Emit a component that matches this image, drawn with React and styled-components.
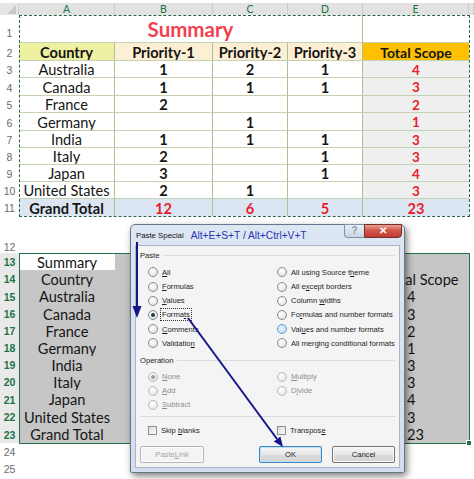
import React from 'react';
import styled, { createGlobalStyle } from 'styled-components';

const Global = createGlobalStyle`
  html, body { margin: 0; padding: 0; background: #fff; }
  body { width: 474px; height: 479px; overflow: hidden; font-family: Lato, "Liberation Sans", sans-serif; }
`;

const COLS = '19px 96px 98px 75px 75px 106px 5px';
const GRID = '#adc196';
const HGRID = '#c5d2b3';
const GREEN = '#217346';
const SEL = '#c6c6c6';

const Page = styled.div`
  position: relative;
  width: 474px;
  height: 479px;
  overflow: hidden;
  background: #fff;
  padding-top: 3px;
  box-sizing: border-box;
`;

const Row = styled.div`
  display: grid;
  grid-template-columns: ${COLS};
  height: ${p => p.$h}px;
`;

const Corner = styled.div`
  position: relative;
  background: #e6e6e6;
  border-right: 1px solid #d0d0d0;
  &::after {
    content: '';
    position: absolute;
    right: 2px;
    bottom: 1px;
    border-left: 9px solid transparent;
    border-bottom: 9px solid #c9c9c9;
  }
`;

const ColHead = styled.div`
  background: #e2e2e2;
  border-right: 1px solid #cdcdcd;
  color: ${GREEN};
  font-size: 10.5px;
  display: flex;
  align-items: center;
  justify-content: center;
  line-height: 1;
`;

const RowNum = styled.div`
  display: flex;
  align-items: flex-end;
  justify-content: center;
  padding-bottom: ${p => (p.$pb ?? 2)}px;
  box-sizing: border-box;
  font-family: "Liberation Sans", Arial, sans-serif;
  font-size: 10.5px;
  color: ${p => (p.$sel ? GREEN : '#6a6a6a')};
  font-weight: ${p => (p.$sel ? 700 : 400)};
  background: ${p => (p.$sel ? '#e9e9e9' : '#fff')};
`;

const Cell = styled.div`
  box-sizing: border-box;
  display: flex;
  align-items: center;
  justify-content: ${p => p.$align || 'center'};
  padding-left: ${p => p.$pl || 0}px;
  padding-top: 1px;
  background: ${p => p.$bg || 'transparent'};
  color: ${p => p.$color || '#151515'};
  font-size: ${p => p.$size || 14.6}px;
  font-weight: ${p => (p.$bold ? 700 : 400)};
  border-right: ${p => (p.$br ? `1px solid ${GRID}` : 'none')};
  border-bottom: ${p => (p.$bb ? `1px solid ${HGRID}` : 'none')};
  grid-column: ${p => (p.$span ? `span ${p.$span}` : 'auto')};
  white-space: nowrap;
  overflow: hidden;
`;

const Marquee = styled.div`
  position: absolute;
  left: 19px;
  top: 15px;
  width: 451px;
  height: 202px;
  box-sizing: border-box;
  border: 1px dashed #2a6548;
  pointer-events: none;
`;

const Selection = styled.div`
  position: absolute;
  left: 19px;
  top: 253px;
  width: 451px;
  height: 191px;
  box-sizing: border-box;
  border: 1px solid ${GREEN};
  pointer-events: none;
  &::after {
    content: '';
    position: absolute;
    right: -3px;
    bottom: -3px;
    width: 4px;
    height: 4px;
    background: ${GREEN};
    border: 1px solid #fff;
  }
`;

/* ---------- Dialog ---------- */
const Dialog = styled.div`
  position: absolute;
  left: 130px;
  top: 224px;
  width: 275px;
  height: 249px;
  box-sizing: border-box;
  background: linear-gradient(#dde7f3, #d3dfee);
  border: 1px solid #66778c;
  border-radius: 5px 5px 2px 2px;
  box-shadow: 2px 3px 7px rgba(0, 0, 0, 0.5);
  display: flex;
  flex-direction: column;
  padding: 0 4px 4px 4px;
  font-family: "Liberation Sans", Arial, sans-serif;
  z-index: 5;
`;

const TitleBar = styled.div`
  height: 21px;
  display: flex;
  align-items: center;
  padding-left: 1px;
`;

const TitleText = styled.span`
  font-size: 7.8px;
  color: #111;
`;

const TitleHint = styled.span`
  font-size: 10.2px;
  color: #2535b5;
  margin-left: 7px;
`;

const Caption = styled.div`
  margin-left: auto;
  align-self: flex-start;
  margin-top: -1px;
  margin-right: -2px;
  display: flex;
`;

const HelpBtn = styled.div`
  width: 20px;
  height: 14px;
  box-sizing: border-box;
  border: 1px solid #7f91a8;
  border-right: none;
  border-radius: 0 0 0 4px;
  background: linear-gradient(#e9eff6, #c9d5e3);
  color: #8a97a8;
  font-size: 10px;
  font-weight: 700;
  display: flex;
  align-items: center;
  justify-content: center;
  line-height: 1;
`;

const CloseBtn = styled.div`
  width: 38px;
  height: 14px;
  box-sizing: border-box;
  border: 1px solid #7b2b2b;
  border-radius: 0 0 4px 0;
  background: linear-gradient(#e9a08f, #d0584b 45%, #bf3b33);
  color: #fff;
  font-size: 10px;
  font-weight: 700;
  display: flex;
  align-items: center;
  justify-content: center;
  line-height: 1;
`;

const Client = styled.div`
  flex: 1;
  background: #f4f4f4;
  border: 1px solid #a8b6c8;
  padding: 4px;
  display: flex;
  flex-direction: column;
  font-size: 7.6px;
  color: #1d1d1d;
`;

const GroupHead = styled.div`
  height: 10px;
  margin-top: ${p => p.$mt || 0}px;
  display: flex;
  align-items: center;
  gap: 4px;
  &::after {
    content: '';
    flex: 1;
    height: 1px;
    background: #dcdcdc;
  }
`;

const OptionGrid = styled.div`
  margin-top: ${p => p.$mt}px;
  padding-left: 8px;
  display: grid;
  grid-template-columns: 129px 1fr;
  grid-auto-flow: column;
  grid-template-rows: repeat(${p => p.$rows}, 14.2px);
`;

const Option = styled.div`
  display: flex;
  align-items: center;
  gap: 2px;
  color: ${p => (p.$disabled ? '#8e8e8e' : '#1d1d1d')};
  white-space: nowrap;
`;

const Radio = styled.span`
  width: 10px;
  height: 10px;
  box-sizing: border-box;
  border-radius: 50%;
  border: 1px solid ${p => (p.$disabled ? '#bcbcbc' : p.$hover ? '#5f9bd3' : '#8c8c8c')};
  background: ${p =>
    p.$hover
      ? 'radial-gradient(circle at 40% 40%, #e9f4fd, #b6d7f3)'
      : 'radial-gradient(circle at 40% 35%, #ffffff, #dcdcdc)'};
  display: flex;
  align-items: center;
  justify-content: center;
  flex-shrink: 0;
  &::after {
    content: '';
    display: ${p => (p.$checked ? 'block' : 'none')};
    width: 4px;
    height: 4px;
    border-radius: 50%;
    background: ${p => (p.$disabled ? '#9a9a9a' : '#1f3a4a')};
  }
`;

const Label = styled.span`
  padding: 1px;
  border: 1px ${p => (p.$focus ? 'dotted #333' : 'solid transparent')};
`;

const U = styled.u`
  text-decoration: underline;
`;

const Separator = styled.div`
  margin-top: 4px;
  height: 1px;
  background: #d8d8d8;
`;

const CheckRow = styled.div`
  margin-top: 7px;
  height: 11px;
  padding-left: 8px;
  display: grid;
  grid-template-columns: 129px 1fr;
`;

const Check = styled.span`
  width: 9px;
  height: 9px;
  box-sizing: border-box;
  border: 1px solid #8f8f8f;
  background: linear-gradient(135deg, #dcdcdc, #fbfbfb);
  flex-shrink: 0;
`;

const ButtonRow = styled.div`
  margin-top: 11px;
  display: flex;
  align-items: center;
  gap: 10px;
`;

const Button = styled.div`
  width: ${p => p.$w}px;
  height: 17px;
  box-sizing: border-box;
  border: 1px solid ${p => (p.$disabled ? '#b3b7ba' : p.$focus ? '#3b84c4' : '#737373')};
  border-radius: 2px;
  background: ${p =>
    p.$disabled ? '#f4f4f4' : 'linear-gradient(#f6f6f6, #e8e8e8 50%, #dcdcdc 51%, #d4d4d4)'};
  box-shadow: ${p => (p.$focus ? 'inset 0 0 0 1px #bfe2f7' : 'inset 0 0 0 1px #fcfcfc')};
  color: ${p => (p.$disabled ? '#a4a4a4' : '#1d1d1d')};
  display: flex;
  align-items: center;
  justify-content: center;
  margin-left: ${p => (p.$push ? 'auto' : '0')};
`;

const Arrows = styled.svg`
  position: absolute;
  left: 0;
  top: 0;
  z-index: 10;
  pointer-events: none;
`;

/* ---------- data ---------- */
const TOP = [
  ['Australia', 1, 2, 1, 4, 17],
  ['Canada', 1, 1, 1, 3, 18],
  ['France', 2, '', '', 2, 17],
  ['Germany', '', 1, '', 1, 18],
  ['India', 1, 1, 1, 3, 17],
  ['Italy', 2, '', 1, 3, 17],
  ['Japan', 3, '', 1, 4, 17],
  ['United States', 2, 1, '', 3, 17],
];

const BOTTOM = [
  ['Summary', '', 17],
  ['Country', 'Total Scope', 17],
  ['Australia', '4', 18],
  ['Canada', '3', 17],
  ['France', '2', 17],
  ['Germany', '1', 17],
  ['India', '3', 17],
  ['Italy', '3', 17],
  ['Japan', '4', 18],
  ['United States', '3', 17],
  ['Grand Total', '23', 18],
];

const RED = '#e41e2b';

function PasteDialog() {
  const left = [
    [<><U>A</U>ll</>],
    [<><U>F</U>ormulas</>],
    [<><U>V</U>alues</>],
    [<>Forma<U>t</U>s</>, { checked: true, focus: true }],
    [<><U>C</U>omments</>],
    [<>Validatio<U>n</U></>],
  ];
  const right = [
    [<>All using Source t<U>h</U>eme</>],
    [<>All e<U>x</U>cept borders</>],
    [<>Column <U>w</U>idths</>],
    [<>Fo<U>r</U>mulas and number formats</>],
    [<>Val<U>u</U>es and number formats</>, { hover: true }],
    [<>All mergin<U>g</U> conditional formats</>],
  ];
  const opItems = [
    [<><U>N</U>one</>, { checked: true }],
    [<><U>A</U>dd</>],
    [<><U>S</U>ubtract</>],
    [<><U>M</U>ultiply</>],
    [<>D<U>i</U>vide</>],
    [null],
  ];
  const renderOpt = ([lab, o = {}], i, dis) =>
    lab === null ? (
      <span key={i} />
    ) : (
      <Option key={i} $disabled={dis}>
        <Radio $checked={o.checked} $hover={o.hover} $disabled={dis} />
        <Label $focus={o.focus}>{lab}</Label>
      </Option>
    );

  return (
    <Dialog>
      <TitleBar>
        <TitleText>Paste Special</TitleText>
        <TitleHint>Alt+E+S+T / Alt+Ctrl+V+T</TitleHint>
        <Caption>
          <HelpBtn>?</HelpBtn>
          <CloseBtn>✕</CloseBtn>
        </Caption>
      </TitleBar>
      <Client>
        <GroupHead>Paste</GroupHead>
        <OptionGrid $mt={5} $rows={6}>
          {left.map((o, i) => renderOpt(o, 'l' + i, false))}
          {right.map((o, i) => renderOpt(o, 'r' + i, false))}
        </OptionGrid>
        <GroupHead $mt={5}>Operation</GroupHead>
        <OptionGrid $mt={4} $rows={3}>
          {opItems.map((o, i) => renderOpt(o, 'o' + i, true))}
        </OptionGrid>
        <Separator />
        <CheckRow>
          <Option>
            <Check />
            <Label>Skip <U>b</U>lanks</Label>
          </Option>
          <Option>
            <Check />
            <Label>Transpos<U>e</U></Label>
          </Option>
        </CheckRow>
        <ButtonRow>
          <Button $w={64} $disabled>Paste <U>L</U>ink</Button>
          <Button $w={63} $focus $push>OK</Button>
          <Button $w={63}>Cancel</Button>
        </ButtonRow>
      </Client>
    </Dialog>
  );
}

export default function App() {
  return (
    <>
      <Global />
      <Page>
        <Row $h={12}>
          <Corner />
          {['A', 'B', 'C', 'D', 'E'].map(l => (
            <ColHead key={l}>{l}</ColHead>
          ))}
          <ColHead />
        </Row>

        <Row $h={28}>
          <RowNum $pb={4}>1</RowNum>
          <Cell $span={4} $br $bb $bold $size={20.5} $color="#f2414f">
            Summary
          </Cell>
          <Cell $bb />
          <Cell />
        </Row>

        <Row $h={18}>
          <RowNum>2</RowNum>
          <Cell $bg="#eef0a2" $br $bb $bold>Country</Cell>
          <Cell $bg="#fcefd3" $br $bb $bold>Priority-1</Cell>
          <Cell $bg="#fcefd3" $br $bb $bold>Priority-2</Cell>
          <Cell $bg="#fcefd3" $br $bb $bold>Priority-3</Cell>
          <Cell $bg="#ffc000" $bb $bold $size={14}>Total Scope</Cell>
          <Cell />
        </Row>

        {TOP.map(([c, p1, p2, p3, t, h], i) => (
          <Row key={c} $h={h}>
            <RowNum>{i + 3}</RowNum>
            <Cell $br $bb>{c}</Cell>
            <Cell $br $bb $bold>{p1}</Cell>
            <Cell $br $bb $bold>{p2}</Cell>
            <Cell $br $bb $bold>{p3}</Cell>
            <Cell $bg="#efefef" $bb $bold $size={13.5} $color={RED}>{t}</Cell>
            <Cell />
          </Row>
        ))}

        <Row $h={17}>
          <RowNum>11</RowNum>
          <Cell $bg="#dce6f2" $br $bold>Grand Total</Cell>
          <Cell $bg="#dce6f2" $br $bold $color={RED}>12</Cell>
          <Cell $bg="#dce6f2" $br $bold $color={RED}>6</Cell>
          <Cell $bg="#dce6f2" $br $bold $color={RED}>5</Cell>
          <Cell $bg="#dce6f2" $bold $color={RED}>23</Cell>
          <Cell />
        </Row>

        <Row $h={37}>
          <RowNum $pb={0}>12</RowNum>
        </Row>

        {BOTTOM.map(([a, e, h], i) => (
          <Row key={a} $h={h}>
            <RowNum $sel>{i + 13}</RowNum>
            <Cell $bg={i === 0 ? '#fff' : SEL}>{a}</Cell>
            <Cell $bg={SEL} />
            <Cell $bg={SEL} />
            <Cell $bg={SEL} />
            <Cell $bg={SEL} $align="flex-start" $pl={i === 1 ? 22 : 44}>{e}</Cell>
            <Cell />
          </Row>
        ))}

        <Row $h={17}>
          <RowNum>24</RowNum>
        </Row>
        <Row $h={17}>
          <RowNum>25</RowNum>
        </Row>

        <Marquee />
        <Selection />
        <PasteDialog />

        <Arrows width="474" height="479" viewBox="0 0 474 479">
          <g stroke="#16168a" strokeWidth="2" fill="#16168a">
            <line x1="137" y1="242" x2="137" y2="308" />
            <polygon points="132.5,306 141.5,306 137,318" stroke="none" />
            <line x1="188" y1="318" x2="277" y2="439" />
            <polygon points="283,447 273.8,441.4 280.4,436.6" stroke="none" />
          </g>
        </Arrows>
      </Page>
    </>
  );
}
